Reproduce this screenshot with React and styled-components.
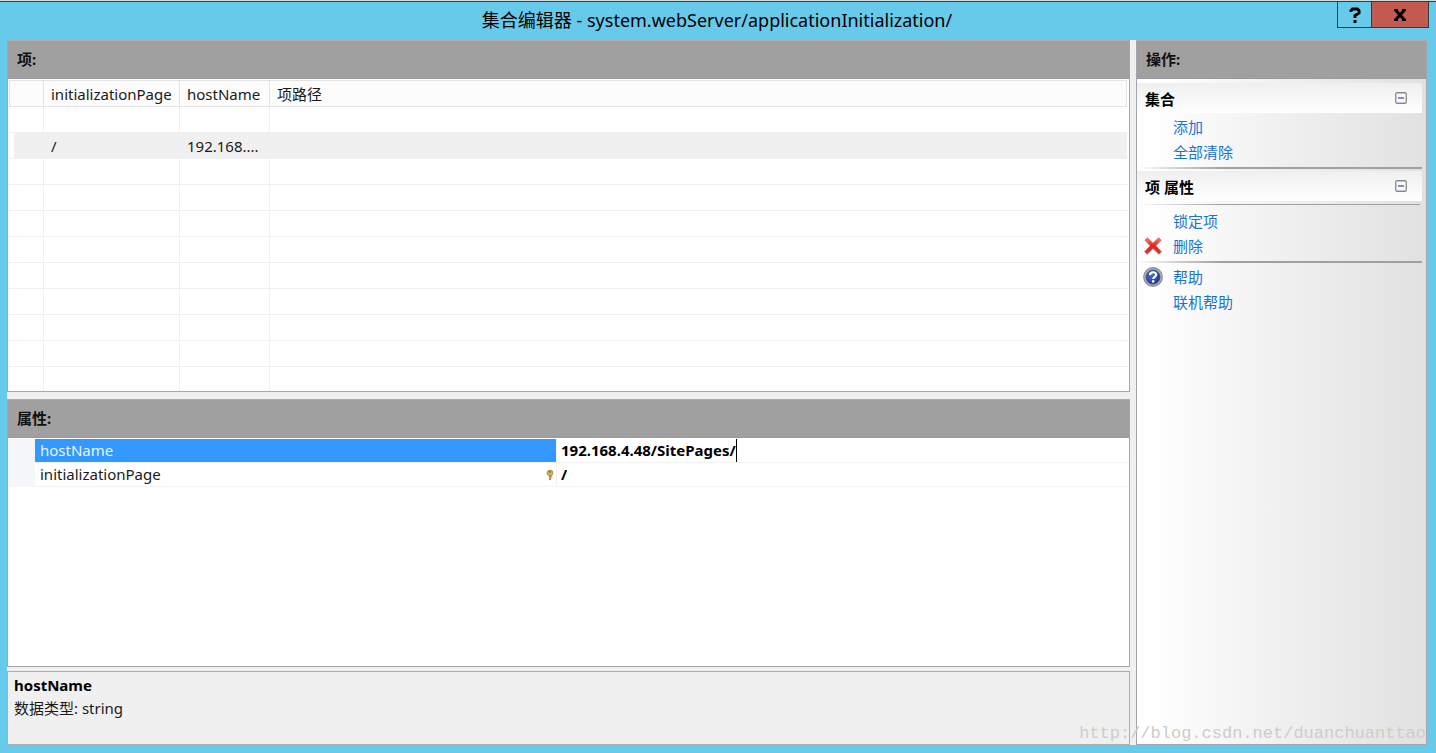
import { useState } from "react"
import styled, { createGlobalStyle } from "styled-components"

const GlobalStyle = createGlobalStyle`
* {
  box-sizing: border-box;
}
body {
  margin: 0;
  background: #67caea;
  color: #1a1a1a;
  font-family: "Noto Sans", "Noto Sans CJK SC", sans-serif;
  font-size: 15px;
}
button, input {
  font: inherit;
  color: inherit;
}`

const Window = styled.div`
position: relative;
display: flex;
flex-direction: column;
min-height: 100vh;
padding: 0 9px 8px 7px;
border-top: 1px solid #d5dcdc;
background: #67caea;
&::before {
  content: "";
  position: absolute;
  top: 0;
  left: 0;
  right: 0;
  height: 1px;
  background: #2f3b40;
}`

const TitleBar = styled.header`
display: grid;
grid-template-columns: 92px 1fr 92px;
height: 39px;
`

const Title = styled.h1`
grid-column: 2;
margin: 0;
color: #000;
font-size: 18px;
font-weight: 400;
line-height: 38px;
text-align: center;
white-space: nowrap;
`

const WindowButtons = styled.div`
display: flex;
justify-content: flex-end;
height: 27px;
margin-right: -2px;
`

const WindowButton = styled.button`
display: flex;
align-items: center;
justify-content: center;
width: ${(props) => (props.$close ? "58px" : "35px")};
margin-left: ${(props) => (props.$close ? "-1px" : "0")};
padding: 0;
border: 1px solid #2f3b40;
background: ${(props) => (props.$close ? "#c35a50" : "#67caea")};
`

const Client = styled.main`
display: flex;
flex: 1;
gap: 6px;
background: #f0f0f0;
`

const Left = styled.div`
display: flex;
flex: 1;
flex-direction: column;
min-width: 0;
`

const Panel = styled.section`
display: flex;
flex-direction: column;
flex: ${(props) => (props.$grow ? "1" : "none")};
margin-bottom: ${(props) => (props.$grow ? "4px" : "7px")};
border: 1px solid #a3a6aa;
border-top-color: #b0adad;
background: #fff;
`

const PanelTitle = styled.h2`
height: 38px;
margin: 0;
padding: 0 9px;
border-bottom: 1px solid #979ba1;
background: #a0a0a0;
color: #111;
font-size: 15px;
font-weight: 700;
line-height: 36px;
`

const Items = styled.table`
width: calc(100% - 3px);
margin: 1px 1px 0;
border-collapse: separate;
border-spacing: 0;
table-layout: fixed;
`

const Col = styled.col`
width: ${(props) => props.$width || "auto"};
`

const HeadCell = styled.th`
height: 27px;
padding: 0 7px;
border: solid #e3e3e3;
border-width: 1px 1px 1px 0;
background: #fcfcfc;
font-weight: 400;
line-height: 24px;
text-align: left;
white-space: nowrap;
&:first-child {
  border-left-width: 1px;
}`

const Cell = styled.td`
height: 26px;
padding: 0 7px;
border: solid #f0f0f0;
border-width: 0 1px 1px 0;
line-height: 24px;
overflow: hidden;
white-space: nowrap;
&:last-child {
  border-right: none;
}`

const Row = styled.tr`
background: ${(props) => (props.$selected ? "#f0f0f0" : "#fff")};
& > td:first-child {
  ${(props) => props.$selected && "background: linear-gradient(90deg, #fff 5px, #f0f0f0 5px);"}
}
&:last-child > td {
  height: 24px;
  border-bottom: none;
}`

const Properties = styled.div`
display: grid;
grid-template-columns: 27px 521fr 573fr;
grid-auto-rows: 24px;
line-height: 23px;
padding-top: 1px;
`

const Gutter = styled.div`
background: #f6f7fb;
`

const PropertyName = styled.label`
display: flex;
align-items: center;
justify-content: space-between;
padding: 0 2px 0 5px;
border-bottom: 1px solid #f3f3f5;
background: ${(props) => (props.$selected ? "#3399ff" : "#fff")};
color: ${(props) => (props.$selected ? "#e8f3ff" : "#1a1a1a")};
`

const PropertyValue = styled.div`
display: flex;
border-bottom: 1px solid #f3f3f5;
border-left: 1px solid #f3f3f5;
color: #000;
font-weight: 700;
`

const ValueInput = styled.input`
field-sizing: content;
height: 23px;
padding: 0 0 0 4px;
border: none;
border-right: 1px solid ${(props) => (props.$active ? "#000" : "transparent")};
border-radius: 0;
outline: none;
background: none;
caret-color: transparent;
font-weight: 700;
`

const Description = styled.section`
height: 74px;
padding: 2px 6px;
border: 1px solid #adadad;
line-height: 23px;
h3 {
  margin: 0;
  color: #000;
  font-size: 15px;
}
p {
  margin: 0;
}`

const Sidebar = styled.aside`
display: flex;
flex: none;
flex-direction: column;
width: 291px;
border: 1px solid #a3a6aa;
border-top-color: #b0adad;
background: linear-gradient(90deg, #fff 4%, #f0f0f0 50%, #e1e1e1);
`

const SidebarBody = styled.div`
padding: 4px 4px 0 0;
`

const GroupHeader = styled.div`
display: flex;
align-items: center;
justify-content: space-between;
height: 30px;
padding: 0 15px 0 8px;
background: linear-gradient(#efefef, #fff);
h3 {
  margin: 0;
  color: #000;
  font-size: 15px;
}`

const Toggle = styled.button`
display: flex;
padding: 0;
border: none;
background: none;
`

const Rule = styled.hr`
height: ${(props) => (props.$light ? "1px" : "2px")};
margin: 3px ${(props) => (props.$light ? "2px" : "0")} ${(props) => props.$gap || "2px"} 0;
border: none;
background: linear-gradient(90deg, transparent, #a0a0a0 30%);
`

const Links = styled.ul`
margin: 0;
padding: 1px 6px 0;
list-style: none;
`

const LinkItem = styled.li`
display: flex;
align-items: center;
height: 25px;
`

const IconSlot = styled.span`
display: flex;
width: 30px;
`

const ActionLink = styled.a`
color: #1874d2;
font-size: 15px;
line-height: 22px;
text-decoration: none;
`

const Watermark = styled.div`
position: absolute;
right: 10px;
bottom: 8px;
color: #cdcdc8;
font-family: "Liberation Mono", monospace;
font-size: 17px;
line-height: 22px;
pointer-events: none;
`

const HelpGlyph = () => (
  <svg width="12" height="16" viewBox="0 0 12 16" fill="none" stroke="#000" strokeWidth="3" aria-hidden="true">
    <path d="M2 5V3.5L3.5 2H8.5L10 3.5V6L6 8.5V11" />
    <path d="M6 13v3" />
  </svg>
)

const CloseGlyph = () => (
  <svg width="14" height="12" viewBox="0 0 14 12" aria-hidden="true">
    <path d="M2.5 1L11.5 11M11.5 1L2.5 11" stroke="#000" strokeWidth="3" />
    <path d="M1 0h4v2H1zM9 0h4v2H9zM1 10h4v2H1zM9 10h4v2H9z" />
  </svg>
)

const MinusBox = ({ open }) => (
  <svg width="12" height="12" viewBox="0 0 12 12" aria-hidden="true">
    <rect x="0.75" y="0.75" width="10.5" height="10.5" rx="1.2" fill="#f8f8f8" stroke="#85888e" strokeWidth="1.3" />
    <path d="M3 6h6" stroke="#5361a0" strokeWidth="1.4" />
    {!open && <path d="M6 3v6" stroke="#5361a0" strokeWidth="1.4" />}
  </svg>
)

const DeleteIcon = () => (
  <svg width="20" height="20" viewBox="0 0 20 20" aria-hidden="true">
    <defs>
      <linearGradient id="red" x1="0" y1="0" x2="0" y2="1">
        <stop offset="0" stopColor="#ee8a84" />
        <stop offset="0.45" stopColor="#e2261c" />
        <stop offset="1" stopColor="#d8342b" />
      </linearGradient>
    </defs>
    <path
      d="M2 4.2L4.4 1.8L10 7.2L15.6 1.8L18.2 4.2L12.8 9.8L18.4 15.8L16 18.2L10 12.6L4.2 18.2L1.6 15.8L7.2 9.8Z"
      fill="url(#red)"
      stroke="#cf5d58"
      strokeWidth="0.8"
      strokeLinejoin="round"
    />
  </svg>
)

const HelpIcon = () => (
  <svg width="20" height="20" viewBox="0 0 20 20" aria-hidden="true">
    <defs>
      <radialGradient id="blue" cx="0.4" cy="0.35" r="0.7">
        <stop offset="0" stopColor="#4f74cc" />
        <stop offset="1" stopColor="#17328c" />
      </radialGradient>
    </defs>
    <circle cx="10" cy="10" r="9.2" fill="#c8cacd" stroke="#8b8d90" strokeWidth="1.4" />
    <circle cx="10" cy="10" r="7.4" fill="url(#blue)" stroke="#737b92" strokeWidth="0.6" />
    <path d="M7 8C7 4.4 13.2 4.4 13.2 7.8C13.2 9.8 10.2 9.8 10.2 12" fill="none" stroke="#fff" strokeWidth="2.2" />
    <circle cx="10.2" cy="14.4" r="1.3" fill="#fff" />
  </svg>
)

const KeyIcon = () => (
  <svg width="8" height="12" viewBox="0 0 8 12" aria-hidden="true">
    <circle cx="4" cy="4" r="2.9" fill="#d8b45c" stroke="#a58040" strokeWidth="0.8" />
    <circle cx="4" cy="2.8" r="0.9" fill="#765322" />
    <path d="M3 6.5h2v4L4 11.5l-1-1z" fill="#bb9145" />
    <path d="M5 8h1.2" stroke="#98712f" />
  </svg>
)

const columns = [
  { label: "", width: "35px" },
  { label: "initializationPage", width: "136px" },
  { label: "hostName", width: "90px" },
  { label: "项路径" },
]

const rows = [
  ["", "", "", ""],
  ["", "/", "192.168....", ""],
  ...Array.from({ length: 9 }, () => ["", "", "", ""]),
]

const Group = ({ title, children }) => {
  const [open, setOpen] = useState(true)
  return (
    <>
      <GroupHeader>
        <h3>{title}</h3>
        <Toggle type="button" aria-label={title} aria-expanded={open} onClick={() => setOpen(!open)}>
          <MinusBox open={open} />
        </Toggle>
      </GroupHeader>
      {open && children}
    </>
  )
}

const Action = ({ icon, children }) => (
  <LinkItem>
    <IconSlot>{icon}</IconSlot>
    <ActionLink href="#">{children}</ActionLink>
  </LinkItem>
)

const App = () => {
  const [hostName, setHostName] = useState("192.168.4.48/SitePages/")
  const [page, setPage] = useState("/")

  return (
    <>
      <GlobalStyle />
      <Window>
        <TitleBar>
          <Title>集合编辑器 - system.webServer/applicationInitialization/</Title>
          <WindowButtons>
            <WindowButton type="button" aria-label="帮助"><HelpGlyph /></WindowButton>
            <WindowButton type="button" aria-label="关闭" $close><CloseGlyph /></WindowButton>
          </WindowButtons>
        </TitleBar>
        <Client>
          <Left>
            <Panel>
              <PanelTitle>项:</PanelTitle>
              <Items>
                <colgroup>
                  {columns.map((c) => <Col key={c.label} $width={c.width} />)}
                </colgroup>
                <thead>
                  <tr>
                    {columns.map((c) => <HeadCell key={c.label} scope="col">{c.label}</HeadCell>)}
                  </tr>
                </thead>
                <tbody>
                  {rows.map((row, i) => (
                    <Row key={i} $selected={i === 1}>
                      {row.map((text, j) => <Cell key={j}>{text}</Cell>)}
                    </Row>
                  ))}
                </tbody>
              </Items>
            </Panel>
            <Panel $grow>
              <PanelTitle>属性:</PanelTitle>
              <Properties>
                <Gutter />
                <PropertyName htmlFor="hostName" $selected>hostName</PropertyName>
                <PropertyValue>
                  <ValueInput id="hostName" $active value={hostName} onChange={(e) => setHostName(e.target.value)} />
                </PropertyValue>
                <Gutter />
                <PropertyName htmlFor="initializationPage">initializationPage<KeyIcon /></PropertyName>
                <PropertyValue>
                  <ValueInput id="initializationPage" value={page} onChange={(e) => setPage(e.target.value)} />
                </PropertyValue>
              </Properties>
            </Panel>
            <Description>
              <h3>hostName</h3>
              <p>数据类型: string</p>
            </Description>
          </Left>
          <Sidebar>
            <PanelTitle>操作:</PanelTitle>
            <SidebarBody>
              <Group title="集合">
                <Links>
                  <Action>添加</Action>
                  <Action>全部清除</Action>
                </Links>
              </Group>
              <Rule />
              <Group title="项 属性">
                <Rule $light />
                <Links>
                  <Action>锁定项</Action>
                  <Action icon={<DeleteIcon />}>删除</Action>
                </Links>
              </Group>
              <Rule $gap="0" />
              <Links>
                <Action icon={<HelpIcon />}>帮助</Action>
                <Action>联机帮助</Action>
              </Links>
            </SidebarBody>
          </Sidebar>
        </Client>
        <Watermark>http://blog.csdn.net/duanchuanttao</Watermark>
      </Window>
    </>
  )
}

export default App
